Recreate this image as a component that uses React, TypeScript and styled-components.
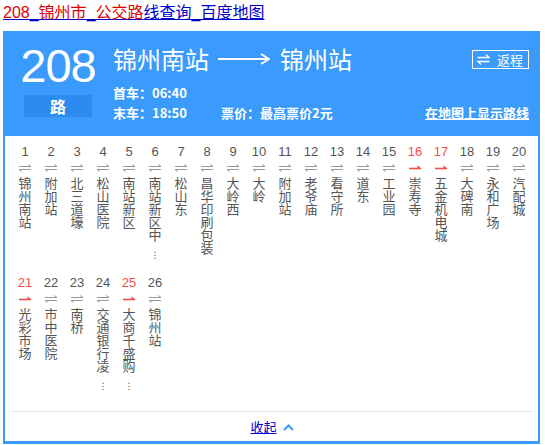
import React from "react";
import styled, { createGlobalStyle } from "styled-components";

const Global = createGlobalStyle`
  html, body { margin: 0; padding: 0; background: #fff; }
  body { font-family: "Liberation Sans", "Noto Sans CJK SC", sans-serif; }
`;

const BLUE = "#3a9bfc";

const Page = styled.div`
  padding: 0 5px 0 3px;
  width: 537px;
`;

const PageTitle = styled.a`
  display: block;
  font-size: 16px;
  line-height: 20px;
  padding-top: 3px;
  height: 28px;
  text-decoration: underline;
  color: #0000cc;
  white-space: nowrap;
`;

const Hit = styled.span`
  color: #dd0000;
`;

const Card = styled.div`
  border: 2px solid ${BLUE};
  border-bottom-width: 3px;
`;

const Header = styled.div`
  background: ${BLUE};
  color: #fff;
  display: flex;
  align-items: flex-start;
  padding: 10px 9px 13px 19px;
  font-family: "Noto Sans CJK SC", sans-serif;
`;

const LineBadge = styled.div`
  width: 68px;
  display: flex;
  flex-direction: column;
  align-items: center;
`;

const LineNo = styled.div`
  font-family: "Liberation Sans", sans-serif;
  font-size: 47px;
  line-height: 46px;
  letter-spacing: -1px;
`;

const LineUnit = styled.div`
  margin-top: 6px;
  width: 68px;
  height: 22px;
  background: #2b8bef;
  font-size: 16px;
  font-weight: bold;
  line-height: 22px;
  text-align: center;
`;

const Main = styled.div`
  flex: 1;
  margin-left: 21px;
  margin-top: 1px;
`;

const TitleRow = styled.div`
  display: flex;
  align-items: center;
  height: 30px;
`;

const Terminal = styled.span`
  font-size: 24px;
  line-height: 30px;
`;

const Arrow = styled.svg`
  margin: 0 10px 0 9px;
`;

const ReturnBtn = styled.button`
  margin-left: auto;
  display: flex;
  align-items: center;
  gap: 7px;
  height: 19px;
  padding: 0 5px 0 4px;
  border: 1px solid #fff;
  background: transparent;
  color: #fff;
  font-family: "Noto Sans CJK SC", sans-serif;
  font-size: 13px;
  line-height: 17px;
`;

const InfoList = styled.div`
  margin-top: 9px;
`;

const InfoRow = styled.div`
  display: flex;
  font-size: 13px;
  font-weight: bold;
  line-height: 20px;
`;

const InfoItem = styled.span<{ $w?: number }>`
  ${(p) => (p.$w ? `width: ${p.$w}px;` : "")}
`;

const MapLink = styled.a`
  margin-left: auto;
  color: #fff;
  text-decoration: underline;
`;

const Stations = styled.div`
  padding: 8px 6px 0 7px;
`;

const Grid = styled.div`
  display: grid;
  grid-template-columns: repeat(20, 26px);
  row-gap: 21px;
`;

const Stop = styled.div`
  display: flex;
  flex-direction: column;
  align-items: center;
`;

const StopNo = styled.div<{ $oneWay: boolean }>`
  font-size: 13px;
  line-height: 16px;
  color: ${(p) => (p.$oneWay ? "#f24d4d" : "#555")};
`;

const Dir = styled.svg`
  margin-top: 4px;
  display: block;
`;

const StopName = styled.div`
  margin-top: 4px;
  width: 13px;
  font-family: "Noto Sans CJK SC", sans-serif;
  font-size: 13px;
  line-height: 13px;
  color: #555;
  word-break: break-all;
`;

const More = styled.div`
  height: 13px;
  font-family: "DejaVu Sans", sans-serif;
  font-size: 9px;
  line-height: 29px;
  text-align: center;
  color: #555;
  overflow: visible;
`;

const Divider = styled.div`
  margin-top: 26px;
  border-top: 1px solid #e6e6e6;
`;

const Footer = styled.div`
  display: flex;
  justify-content: center;
  align-items: center;
  gap: 6px;
  padding: 7px 0 6px;
  font-family: "Noto Sans CJK SC", sans-serif;
  font-size: 13px;
  line-height: 16px;
`;

const Collapse = styled.a`
  color: #0000cc;
  text-decoration: underline;
`;

type Station = { name: string; more?: boolean; oneWay?: boolean };

const stations: Station[] = [
  { name: "锦州南站" },
  { name: "附加站" },
  { name: "北三道壕" },
  { name: "松山医院" },
  { name: "南站新区" },
  { name: "南站新区中", more: true },
  { name: "松山东" },
  { name: "昌华印刷包装" },
  { name: "大岭西" },
  { name: "大岭" },
  { name: "附加站" },
  { name: "老爷庙" },
  { name: "看守所" },
  { name: "道东" },
  { name: "工业园" },
  { name: "崇寿寺", oneWay: true },
  { name: "五金机电城", oneWay: true },
  { name: "大碑南" },
  { name: "永和广场" },
  { name: "汽配城" },
  { name: "光彩市场", oneWay: true },
  { name: "市中医院" },
  { name: "南桥" },
  { name: "交通银行凌", more: true },
  { name: "大商千盛购", more: true, oneWay: true },
  { name: "锦州站" },
];

// Both-way stops get a ⇌ pair of half arrows; one-way stops a single red arrow.
function DirIcon({ oneWay }: { oneWay: boolean }) {
  if (oneWay) {
    return (
      <Dir width="14" height="8" viewBox="0 0 14 8">
        <path d="M1 4.5 H13" stroke="#f24d4d" strokeWidth="1.6" />
        <path d="M9.5 1.2 L13.6 5 H9.5 Z" fill="#f24d4d" />
      </Dir>
    );
  }
  return (
    <Dir width="14" height="8" viewBox="0 0 14 8">
      <path d="M1 2.5 H13 L10.2 0.5" stroke="#999" strokeWidth="1" fill="none" />
      <path d="M13 5.5 H1 L3.8 7.5" stroke="#999" strokeWidth="1" fill="none" />
    </Dir>
  );
}

export default function App() {
  return (
    <>
      <Global />
      <Page>
        <PageTitle href="#">
          <Hit>208</Hit>_<Hit>锦州市</Hit>_<Hit>公交路</Hit>线查询_百度地图
        </PageTitle>
        <Card>
          <Header>
            <LineBadge>
              <LineNo>208</LineNo>
              <LineUnit>路</LineUnit>
            </LineBadge>
            <Main>
              <TitleRow>
                <Terminal>锦州南站</Terminal>
                <Arrow width="52" height="12" viewBox="0 0 52 12">
                  <path d="M0 6 H49" stroke="#fff" strokeWidth="2" />
                  <path d="M43 1 L51 6 L43 11" stroke="#fff" strokeWidth="2" fill="none" />
                </Arrow>
                <Terminal>锦州站</Terminal>
                <ReturnBtn>
                  <svg width="13" height="11" viewBox="0 0 13 11">
                    <path d="M0.5 3.5 H12 L9 0.5" stroke="#fff" strokeWidth="1.3" fill="none" />
                    <path d="M12.5 7.5 H1 L4 10.5" stroke="#fff" strokeWidth="1.3" fill="none" />
                  </svg>
                  返程
                </ReturnBtn>
              </TitleRow>
              <InfoList>
                <InfoRow>
                  <InfoItem>首车：06:40</InfoItem>
                </InfoRow>
                <InfoRow>
                  <InfoItem $w={108}>末车：18:50</InfoItem>
                  <InfoItem>票价：最高票价2元</InfoItem>
                  <MapLink href="#">在地图上显示路线</MapLink>
                </InfoRow>
              </InfoList>
            </Main>
          </Header>
          <Stations>
            <Grid>
              {stations.map((s, i) => (
                <Stop key={i}>
                  <StopNo $oneWay={!!s.oneWay}>{i + 1}</StopNo>
                  <DirIcon oneWay={!!s.oneWay} />
                  <StopName>
                    {s.name}
                    {s.more && <More>⋮</More>}
                  </StopName>
                </Stop>
              ))}
            </Grid>
            <Divider />
            <Footer>
              <Collapse href="#">收起</Collapse>
              <svg width="11" height="7" viewBox="0 0 11 7">
                <path d="M1 6 L5.5 1.5 L10 6" stroke={BLUE} strokeWidth="2" fill="none" />
              </svg>
            </Footer>
          </Stations>
        </Card>
      </Page>
    </>
  );
}
